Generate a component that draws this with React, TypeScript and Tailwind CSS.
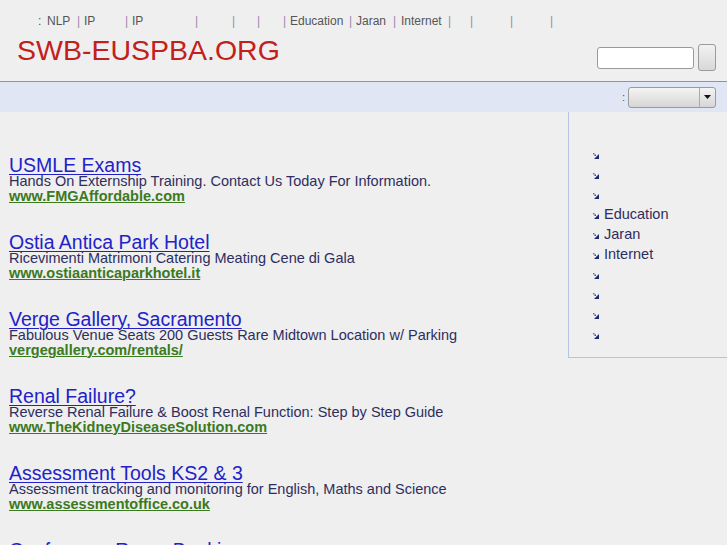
import React from "react";

const ads = [
  {
    title: "USMLE Exams",
    desc: "Hands On Externship Training. Contact Us Today For Information.",
    url: "www.FMGAffordable.com",
  },
  {
    title: "Ostia Antica Park Hotel",
    desc: "Ricevimenti Matrimoni Catering Meating Cene di Gala",
    url: "www.ostiaanticaparkhotel.it",
  },
  {
    title: "Verge Gallery, Sacramento",
    desc: "Fabulous Venue Seats 200 Guests Rare Midtown Location w/ Parking",
    url: "vergegallery.com/rentals/",
  },
  {
    title: "Renal Failure?",
    desc: "Reverse Renal Failure & Boost Renal Function: Step by Step Guide",
    url: "www.TheKidneyDiseaseSolution.com",
  },
  {
    title: "Assessment Tools KS2 & 3",
    desc: "Assessment tracking and monitoring for English, Maths and Science",
    url: "www.assessmentoffice.co.uk",
  },
  {
    title: "Conference Room Booking",
    desc: "",
    url: "",
  },
];

const sideItems = ["", "", "", "Education", "Jaran", "Internet", "", "", "", ""];

function Arrow() {
  return (
    <svg width="7" height="7" viewBox="0 0 7 7" className="shrink-0">
      <polygon points="7,2 7,7 2,7" fill="#1c2a6e" />
      <rect x="1" y="1" width="1.5" height="1.5" fill="#6a78a8" />
      <rect x="2.5" y="2.5" width="1.5" height="1.5" fill="#3a4888" />
    </svg>
  );
}

function Pipe() {
  return <span className="text-[#9a8aae]">|</span>;
}

export default function App() {
  return (
    <div
      className="h-[545px] w-[727px] overflow-hidden bg-[#efefef]"
      style={{ fontFamily: '"Liberation Sans", Arial, sans-serif' }}
    >
      {/* Header */}
      <div className="h-[81px]">
        <div className="flex pl-[38px] pt-[14px] text-[12px] leading-[14px] text-[#555] whitespace-nowrap">
          <span className="w-[9px]">:</span>
          <span className="w-[30px]">NLP</span>
          <span className="w-[7px]"><Pipe /></span>
          <span className="w-[41px]">IP</span>
          <span className="w-[7px]"><Pipe /></span>
          <span className="w-[63px]">IP</span>
          <span className="w-[37px]"><Pipe /></span>
          <span className="w-[25px]"><Pipe /></span>
          <span className="w-[26px]"><Pipe /></span>
          <span className="w-[7px]"><Pipe /></span>
          <span className="w-[59px]">Education</span>
          <span className="w-[7px]"><Pipe /></span>
          <span className="w-[37px]">Jaran</span>
          <span className="w-[8px]"><Pipe /></span>
          <span className="w-[47px]">Internet</span>
          <span className="w-[22px]"><Pipe /></span>
          <span className="w-[40px]"><Pipe /></span>
          <span className="w-[40px]"><Pipe /></span>
          <span><Pipe /></span>
        </div>
        <div className="flex items-start justify-between">
          <div className="pl-[17px] pt-[6px] text-[28.5px] leading-[32px] text-[#c3201b]">
            SWB-EUSPBA.ORG
          </div>
          <div className="flex items-center gap-[4px] pr-[11px] pt-[16px]">
            <div className="h-[22px] w-[97px] rounded-[3px] border border-[#9a9a9a] bg-white" />
            <div className="h-[27px] w-[18px] rounded-[3px] border border-[#9a9a9a] bg-gradient-to-b from-[#f2f2f2] to-[#d8d8d8]" />
          </div>
        </div>
      </div>

      {/* Band */}
      <div className="flex h-[31px] items-center justify-end border-t border-[#7e95cc] bg-[#e0e6f4] pr-[11px]">
        <span className="mr-[3px] text-[11px] text-[#555]">:</span>
        <div className="flex h-[21px] w-[88px] items-stretch rounded-[3px] border border-[#9a9a9a] bg-gradient-to-b from-[#f4f4f4] to-[#d6d6d6]">
          <div className="flex-1" />
          <div className="flex w-[16px] items-center justify-center border-l border-[#aaa]">
            <svg width="7" height="4" viewBox="0 0 7 4">
              <polygon points="0,0 7,0 3.5,4" fill="#111" />
            </svg>
          </div>
        </div>
      </div>

      {/* Body */}
      <div className="flex">
        <div className="flex-1 pl-[9px] pt-[45px]">
          {ads.map((ad, i) => (
            <div key={i} className="h-[77px]">
              <a className="block text-[19.5px] leading-[17px] text-[#2222c8] underline decoration-1 underline-offset-[2px]">
                {ad.title}
              </a>
              {ad.desc && (
                <div className="text-[14.5px] leading-[15px] text-[#2e2e5e]">{ad.desc}</div>
              )}
              {ad.url && (
                <a className="block text-[14.5px] font-bold leading-[14px] text-[#3b7a1e] underline decoration-1">
                  {ad.url}
                </a>
              )}
            </div>
          ))}
        </div>
        <div className="h-[246px] w-[159px] shrink-0 border-b border-l border-[#b4c4e4] pl-[23px] pt-[33px]">
          {sideItems.map((t, i) => (
            <div key={i} className="flex h-[20px] items-center gap-[5px] text-[14.5px] text-[#2e2e5e]">
              <Arrow />
              <span>{t}</span>
            </div>
          ))}
        </div>
      </div>
    </div>
  );
}
